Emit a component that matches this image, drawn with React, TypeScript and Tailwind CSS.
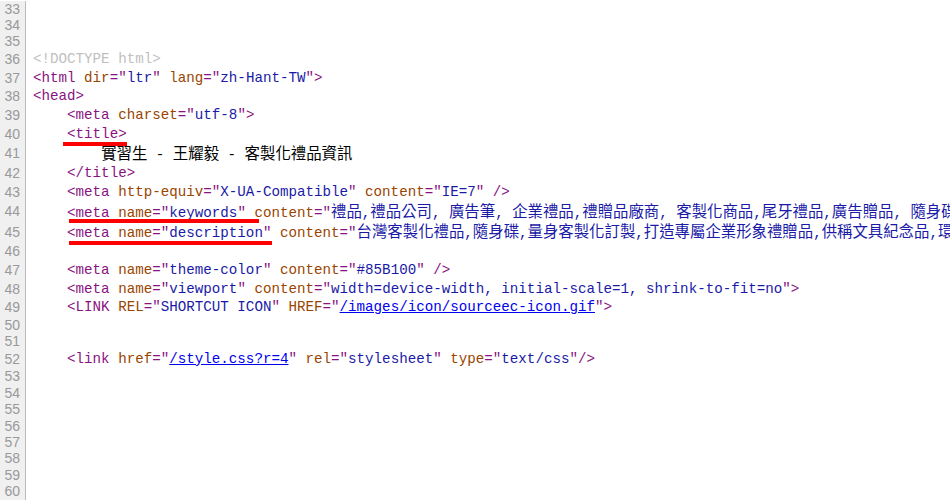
import React from "react";

type Row = { n: number; h: string; body?: React.ReactNode };

const Tg = ({ c }: { c: string }) => <span className="text-[#881280]">{c}</span>;
const An = ({ c }: { c: string }) => <span className="text-[#994500]">{c}</span>;

// splits a string into latin / CJK runs so the CJK glyphs get their own size
const Cjk = ({ text }: { text: string }) => {
  const parts = text.split(/([\u3000-\u9fff\uff00-\uffef]+)/);
  return (
    <>
      {parts.map((p, i) =>
        /[\u3000-\u9fff\uff00-\uffef]/.test(p) ? (
          <span key={i} className="text-[15.4px] font-['Noto_Sans_CJK_TC',sans-serif]">
            {p}
          </span>
        ) : (
          <span key={i}>{p}</span>
        )
      )}
    </>
  );
};

const Attr = ({ name, value, link }: { name: string; value: string; link?: boolean }) => (
  <>
    <span> </span>
    <An c={name} />
    <Tg c={'="'} />
    {link ? (
      <span className="text-[#0000ee] underline">{value}</span>
    ) : (
      <span className="text-[#1a1aa6]">
        <Cjk text={value} />
      </span>
    )}
    <Tg c={'"'} />
  </>
);

const E = "h-[16.4px]";
const T = "h-[18.7px]";
const C = "h-[20.5px]";
const IND = "    ";

const rows: Row[] = [
  { n: 33, h: E },
  { n: 34, h: E },
  { n: 35, h: E },
  { n: 36, h: T, body: <span className="text-[#c0c0c0]">{"<!DOCTYPE html>"}</span> },
  {
    n: 37,
    h: T,
    body: (
      <>
        <Tg c="<html" />
        <Attr name="dir" value="ltr" />
        <Attr name="lang" value="zh-Hant-TW" />
        <Tg c=">" />
      </>
    ),
  },
  { n: 38, h: T, body: <Tg c="<head>" /> },
  {
    n: 39,
    h: T,
    body: (
      <>
        {IND}
        <Tg c="<meta" />
        <Attr name="charset" value="utf-8" />
        <Tg c=">" />
      </>
    ),
  },
  {
    n: 40,
    h: T,
    body: (
      <>
        {IND}
        <Tg c="<title>" />
      </>
    ),
  },
  {
    n: 41,
    h: C,
    body: (
      <span className="text-black">
        {IND + IND}
        <Cjk text="實習生 - 王耀毅 - 客製化禮品資訊" />
      </span>
    ),
  },
  {
    n: 42,
    h: T,
    body: (
      <>
        {IND}
        <Tg c="</title>" />
      </>
    ),
  },
  {
    n: 43,
    h: T,
    body: (
      <>
        {IND}
        <Tg c="<meta" />
        <Attr name="http-equiv" value="X-UA-Compatible" />
        <Attr name="content" value="IE=7" />
        <Tg c=" />" />
      </>
    ),
  },
  {
    n: 44,
    h: C,
    body: (
      <>
        {IND}
        <Tg c="<meta" />
        <Attr name="name" value="keywords" />
        <Attr
          name="content"
          value="禮品,禮品公司, 廣告筆, 企業禮品,禮贈品廠商, 客製化商品,尾牙禮品,廣告贈品, 隨身碟"
        />
      </>
    ),
  },
  {
    n: 45,
    h: C,
    body: (
      <>
        {IND}
        <Tg c="<meta" />
        <Attr name="name" value="description" />
        <Attr
          name="content"
          value="台灣客製化禮品,隨身碟,量身客製化訂製,打造專屬企業形象禮贈品,供稱文具紀念品,環"
        />
      </>
    ),
  },
  { n: 46, h: T, body: IND },
  {
    n: 47,
    h: T,
    body: (
      <>
        {IND}
        <Tg c="<meta" />
        <Attr name="name" value="theme-color" />
        <Attr name="content" value="#85B100" />
        <Tg c=" />" />
      </>
    ),
  },
  {
    n: 48,
    h: T,
    body: (
      <>
        {IND}
        <Tg c="<meta" />
        <Attr name="name" value="viewport" />
        <Attr name="content" value="width=device-width, initial-scale=1, shrink-to-fit=no" />
        <Tg c=">" />
      </>
    ),
  },
  {
    n: 49,
    h: T,
    body: (
      <>
        {IND}
        <Tg c="<LINK" />
        <Attr name="REL" value="SHORTCUT ICON" />
        <Attr name="HREF" value="/images/icon/sourceec-icon.gif" link />
        <Tg c=">" />
      </>
    ),
  },
  { n: 50, h: E },
  { n: 51, h: E },
  {
    n: 52,
    h: T,
    body: (
      <>
        {IND}
        <Tg c="<link" />
        <Attr name="href" value="/style.css?r=4" link />
        <Attr name="rel" value="stylesheet" />
        <Attr name="type" value="text/css" />
        <Tg c="/>" />
      </>
    ),
  },
  { n: 53, h: E },
  { n: 54, h: E },
  { n: 55, h: E },
  { n: 56, h: E },
  { n: 57, h: E },
  { n: 58, h: E },
  { n: 59, h: E },
  { n: 60, h: E },
  { n: 61, h: E },
];

export default function App() {
  return (
    <div className="relative w-[950px] h-[500px] overflow-hidden bg-white">
      <div className="flex flex-col pt-[0.5px]">
        {rows.map((r) => (
          <div key={r.n} className={`flex shrink-0 ${r.h}`}>
            <div className="w-[26px] shrink-0 flex items-center justify-end pr-[5px] bg-[#f0f0f0] border-r border-[#bbbbbb] text-[#999999] text-[14px] font-['Liberation_Sans',Arial,sans-serif] leading-none">
              {r.n}
            </div>
            <div className="flex-1 min-w-0 flex items-center pl-[7px] text-[14.2px] leading-none font-['Liberation_Mono','Noto_Sans_CJK_TC',monospace] text-black">
              <span className="whitespace-pre">{r.body}</span>
            </div>
          </div>
        ))}
      </div>

      {/* red annotation strokes */}
      <div className="absolute left-[63px] top-[142px] w-[64px] h-[4px] bg-[#ff0000]" />
      <div className="absolute left-[69px] top-[219px] w-[190px] h-[4px] bg-[#ff0000]" />
      <div className="absolute left-[69px] top-[240.5px] w-[203px] h-[4px] bg-[#ff0000]" />
    </div>
  );
}
